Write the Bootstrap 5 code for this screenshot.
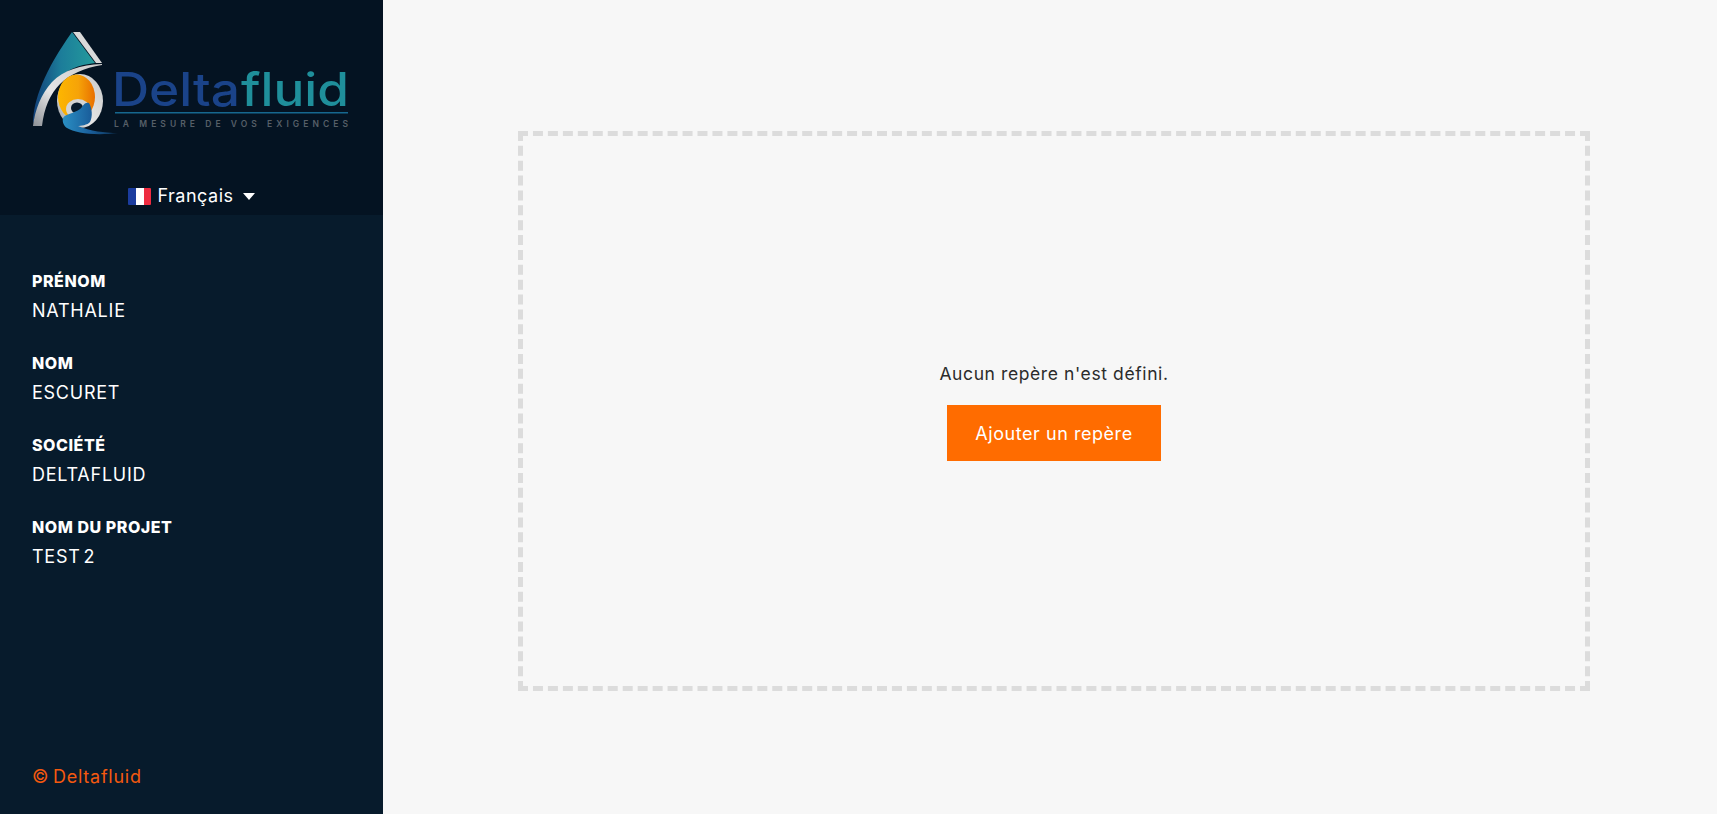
<!DOCTYPE html>
<html lang="fr">
<head>
  <meta charset="UTF-8">
  <meta name="viewport" content="width=device-width, initial-scale=1.0">
  <title>Deltafluid</title>
  <link href="https://cdn.jsdelivr.net/npm/bootstrap@5.3.0/dist/css/bootstrap.min.css" rel="stylesheet">
  <style>
    body { background-color: #f7f7f7; font-family: "Inter", "Liberation Sans", sans-serif; color: #2b2b2b; }
    .page-wrap { height: 100vh; overflow: hidden; }
    .side-panel { width: 383px; background-color: #071b2c; color: #fff; }
    .side-head { height: 215px; background-color: #041322; padding-top: 28px; }
    .logo-svg { display: block; width: 383px; height: 110px; }
    .lang-btn { color: #fff; font-size: 18px; line-height: 22px; margin-top: 47px; letter-spacing: .5px; }
    .lang-btn:hover { color: #fff; }
    .flag-box { width: 23px; height: 17px; border-radius: 1px; overflow: hidden; margin-right: 6px; }
    .flag-box span { flex: 1; }
    .flag-blue { background: #1b3c9e; }
    .flag-white { background: #fff; }
    .flag-red { background: #ee2b40; }
    .caret-down { width: 0; height: 0; margin-left: 9px; border-left: 6px solid transparent; border-right: 6px solid transparent; border-top: 7px solid #fff; }
    .info-list { padding: 55px 32px 0; }
    .info-item { margin-bottom: 30px; }
    .info-label { font-size: 16px; font-weight: 800; line-height: 22px; letter-spacing: .55px; text-transform: uppercase; }
    .info-value { font-size: 18px; line-height: 22px; margin-top: 8px; letter-spacing: .75px; word-spacing: -3px; }
    .side-foot { padding: 0 32px 26px; color: #f4590f; font-size: 18px; line-height: 22px; letter-spacing: .75px; word-spacing: -2px; }
    .main-zone { padding: 131px 127px 100px 135px; }
    .dash-box { width: 1072px; height: 560px; border: 5px dashed #dcdcdc; }
    .empty-msg { font-size: 17.5px; line-height: 22px; letter-spacing: .6px; margin-top: 2px; margin-bottom: 20px; }
    .btn-repere { background-color: #ff6c00; color: #fff; border: 0; border-radius: 0; width: 214px; height: 56px; font-size: 18px; letter-spacing: .55px; }
    .btn-repere:hover { background-color: #ff6c00; color: #fff; }
  </style>
</head>
<body>
  <div class="page-wrap d-flex">
    <aside class="side-panel d-flex flex-column flex-shrink-0">
      <div class="side-head">
        <svg class="logo-svg" viewBox="0 28 383 110" role="img" aria-label="Deltafluid">
          <defs>
            <linearGradient id="sailGrad" x1="0" y1="0" x2="1" y2="0">
              <stop offset="0" stop-color="#123f78"/>
              <stop offset=".45" stop-color="#1c7d9a"/>
              <stop offset="1" stop-color="#249b9c"/>
            </linearGradient>
            <linearGradient id="silverGrad" x1="0" y1="1" x2="1" y2="0">
              <stop offset="0" stop-color="#8d9197"/>
              <stop offset=".4" stop-color="#e6e6e6"/>
              <stop offset="1" stop-color="#c9c9c9"/>
            </linearGradient>
            <linearGradient id="orangeGrad" x1="0" y1="0" x2="1" y2="0">
              <stop offset="0" stop-color="#fdb600"/>
              <stop offset=".55" stop-color="#f6a308"/>
              <stop offset="1" stop-color="#e86f00"/>
            </linearGradient>
            <linearGradient id="swooshGrad" x1="0" y1="0" x2="1" y2="0">
              <stop offset="0" stop-color="#2a8fc4"/>
              <stop offset=".5" stop-color="#1a5f9c"/>
              <stop offset="1" stop-color="#0b2c4c"/>
            </linearGradient>
          </defs>
          <!-- sail -->
          <path d="M72 32 L95 63 C78 65 66 70 57 80 C45 92 37 107 33 124 C33 100 45 70 72 32 Z" fill="url(#sailGrad)"/>
          <path d="M73 32 L80 32 L102 63 L96 63 Z" fill="#d9d9d9"/>
          <path d="M102 64 C80 65 64 70 52 82 C41 94 35 110 33 126 L42 126 C44 108 50 94 60 84 C70 74 84 68 102 65 Z" fill="url(#silverGrad)"/>
          <!-- ring -->
          <ellipse cx="80" cy="101" rx="23" ry="27" fill="url(#silverGrad)"/>
          <ellipse cx="76.500" cy="97" rx="18.500" ry="22.500" fill="url(#orangeGrad)"/>
          <ellipse cx="78" cy="109" rx="12" ry="10" fill="#d4d4d4"/>
          <ellipse cx="77" cy="108" rx="6" ry="5.500" fill="#071a2b"/>
          <!-- swoosh -->
          <path d="M63 118 C66 113 78 113 82 107 C84 103 87 102 89 103 C92 108 93 116 90 122 C88 125 80 126 78 126 C90 131 105 133 118 133 C95 136 75 133 67 128 C64 126 62 122 63 118 Z" fill="url(#swooshGrad)"/>
          <!-- wordmark -->
          <text x="112" y="106" font-family="Inter, sans-serif" font-size="46" font-weight="500" fill="#1a4389" textLength="128" lengthAdjust="spacingAndGlyphs">Delta</text>
          <text x="241" y="106" font-family="Inter, sans-serif" font-size="46" font-weight="500" fill="#1f8f9b" textLength="108" lengthAdjust="spacingAndGlyphs">fluid</text>
          <rect x="115" y="112" width="233" height="1.500" fill="#16688f"/>
          <text x="114" y="127" font-family="Inter, sans-serif" font-size="8.500" font-weight="600" fill="#565f68" textLength="234">LA MESURE DE VOS EXIGENCES</text>
        </svg>
        <div class="d-flex justify-content-center">
          <a href="#" class="lang-btn d-flex align-items-center text-decoration-none">
            <span class="flag-box d-flex"><span class="flag-blue"></span><span class="flag-white"></span><span class="flag-red"></span></span>
            Français
            <span class="caret-down"></span>
          </a>
        </div>
      </div>
      <div class="info-list flex-grow-1">
        <div class="info-item"><div class="info-label">Prénom</div><div class="info-value">NATHALIE</div></div>
        <div class="info-item"><div class="info-label">Nom</div><div class="info-value">ESCURET</div></div>
        <div class="info-item"><div class="info-label">Société</div><div class="info-value">DELTAFLUID</div></div>
        <div class="info-item"><div class="info-label">Nom du projet</div><div class="info-value">TEST 2</div></div>
      </div>
      <div class="side-foot">© Deltafluid</div>
    </aside>
    <main class="main-zone flex-grow-1">
      <div class="dash-box d-flex flex-column align-items-center justify-content-center">
        <p class="empty-msg">Aucun repère n'est défini.</p>
        <button type="button" class="btn btn-repere">Ajouter un repère</button>
      </div>
    </main>
  </div>
  <script src="https://cdn.jsdelivr.net/npm/bootstrap@5.3.0/dist/js/bootstrap.bundle.min.js"></script>
</body>
</html>
